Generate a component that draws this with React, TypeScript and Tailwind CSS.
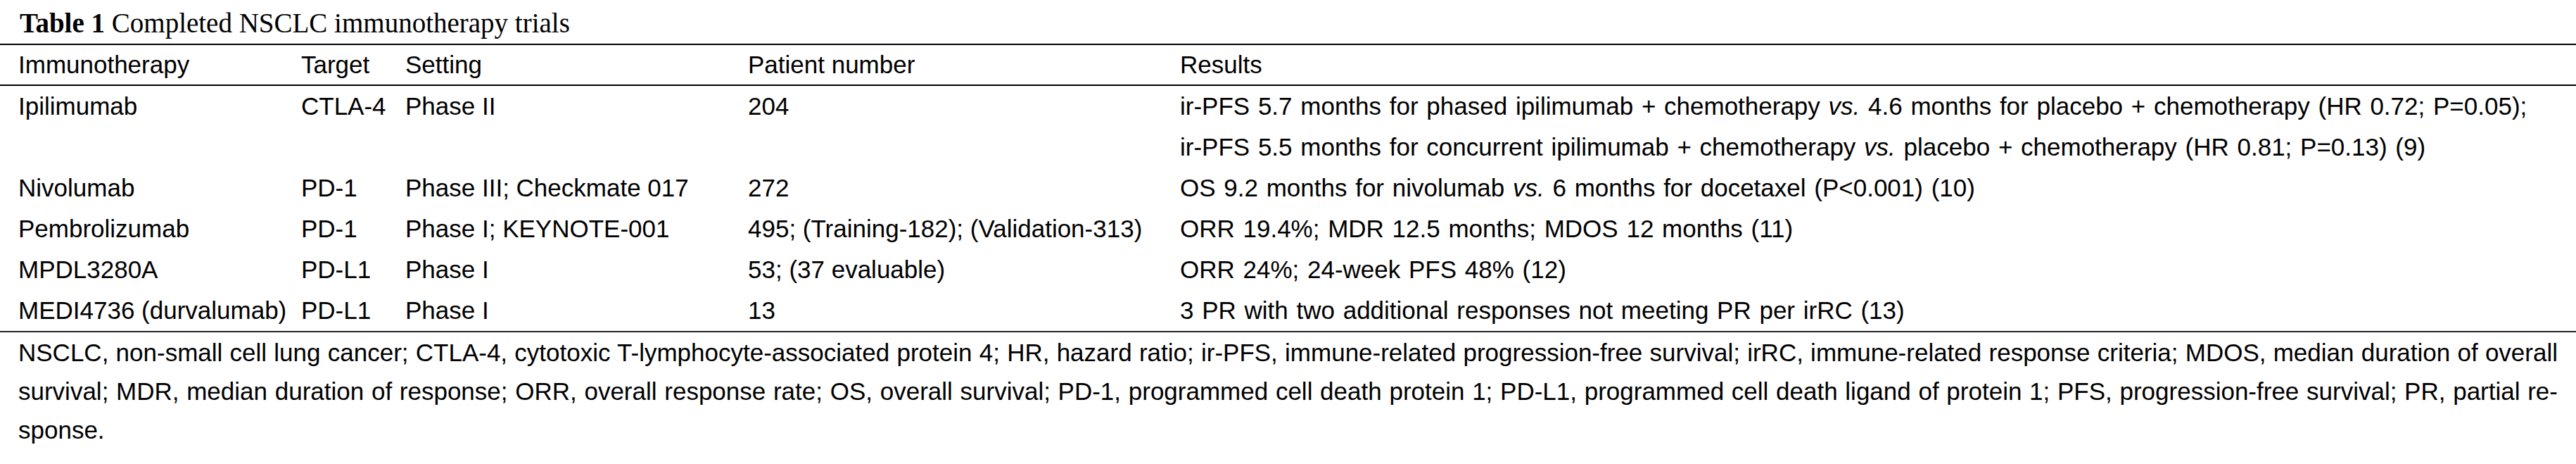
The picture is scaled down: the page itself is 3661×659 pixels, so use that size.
import React from "react";

type Row = {
  name: string;
  target: string;
  setting: string;
  patients: string;
  results: React.ReactNode[];
};

const rows: Row[] = [
  {
    name: "Ipilimumab",
    target: "CTLA-4",
    setting: "Phase II",
    patients: "204",
    results: [
      <>
        ir-PFS 5.7 months for phased ipilimumab + chemotherapy <i>vs.</i> 4.6 months for placebo + chemotherapy (HR 0.72; P=0.05);
      </>,
      <>
        ir-PFS 5.5 months for concurrent ipilimumab + chemotherapy <i>vs.</i> placebo + chemotherapy (HR 0.81; P=0.13) (9)
      </>,
    ],
  },
  {
    name: "Nivolumab",
    target: "PD-1",
    setting: "Phase III; Checkmate 017",
    patients: "272",
    results: [
      <>
        OS 9.2 months for nivolumab <i>vs.</i> 6 months for docetaxel (P&lt;0.001) (10)
      </>,
    ],
  },
  {
    name: "Pembrolizumab",
    target: "PD-1",
    setting: "Phase I; KEYNOTE-001",
    patients: "495; (Training-182); (Validation-313)",
    results: [<>ORR 19.4%; MDR 12.5 months; MDOS 12 months (11)</>],
  },
  {
    name: "MPDL3280A",
    target: "PD-L1",
    setting: "Phase I",
    patients: "53; (37 evaluable)",
    results: [<>ORR 24%; 24-week PFS 48% (12)</>],
  },
  {
    name: "MEDI4736 (durvalumab)",
    target: "PD-L1",
    setting: "Phase I",
    patients: "13",
    results: [<>3 PR with two additional responses not meeting PR per irRC (13)</>],
  },
];

const cols = "grid grid-cols-[402px_148px_487px_614px_1fr] pl-[26px] pr-[26px]";

export default function App() {
  return (
    <div className="w-[3661px] h-[659px] bg-white text-black font-['Liberation_Sans',Arial,sans-serif] text-[35px]">
      {/* Caption */}
      <div className="h-[62px] pt-[11px] pl-[28px] font-['Liberation_Serif','Times_New_Roman',serif] text-[39px] leading-[43px] whitespace-nowrap">
        <span className="font-bold">Table 1</span> Completed NSCLC immunotherapy trials
      </div>

      <div className="h-[2px] bg-black" />

      {/* Header */}
      <div className={`${cols} leading-[56px] whitespace-nowrap`}>
        <div>Immunotherapy</div>
        <div>Target</div>
        <div>Setting</div>
        <div>Patient number</div>
        <div>Results</div>
      </div>

      <div className="h-[2px] bg-black" />

      {/* Body */}
      <div className="leading-[58px] whitespace-nowrap">
        {rows.map((r) => (
          <div key={r.name} className={cols}>
            <div>{r.name}</div>
            <div>{r.target}</div>
            <div>{r.setting}</div>
            <div>{r.patients}</div>
            <div className="[word-spacing:2px]">
              {r.results.map((line, i) => (
                <div key={i}>{line}</div>
              ))}
            </div>
          </div>
        ))}
      </div>

      <div className="h-[2px] bg-[#222]" />

      {/* Footnote */}
      <div className="pt-[1px] pl-[26px] pr-[26px] leading-[55px] text-justify">
        <div className="[text-align-last:justify]">
          NSCLC, non-small cell lung cancer; CTLA-4, cytotoxic T-lymphocyte-associated protein 4; HR, hazard ratio; ir-PFS, immune-related progression-free survival; irRC, immune-related response criteria; MDOS, median duration of overall
        </div>
        <div className="[text-align-last:justify]">
          survival; MDR, median duration of response; ORR, overall response rate; OS, overall survival; PD-1, programmed cell death protein 1; PD-L1, programmed cell death ligand of protein 1; PFS, progression-free survival; PR, partial re-
        </div>
        <div>sponse.</div>
      </div>
    </div>
  );
}
